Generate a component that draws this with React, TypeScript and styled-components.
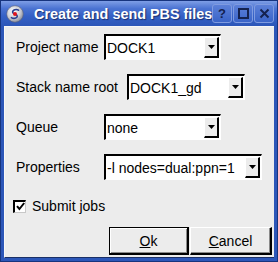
import React, {useState} from "react";
import styled, {createGlobalStyle} from "styled-components";

const Global = createGlobalStyle`
  html, body {
    margin: 0;
    padding: 0;
    background: #ececec;
  }
  * {
    box-sizing: border-box;
  }
`

const PbsDialog = () => {
    const [submit, setSubmit] = useState(true)

    return (
        <Frame>
            <Global/>
            <TitleBar>
                <AppIcon viewBox="0 0 18 18" width={18} height={18}>
                    <defs>
                        <radialGradient id="disc" cx="40%" cy="35%" r="70%">
                            <stop offset="0%" stopColor="#ffffff"/>
                            <stop offset="60%" stopColor="#c9ccd4"/>
                            <stop offset="100%" stopColor="#7d8292"/>
                        </radialGradient>
                    </defs>
                    <circle cx="9" cy="9" r="8.3" fill="url(#disc)" stroke="#5a6078" strokeWidth="0.6"/>
                    <path d="M12.5 5.2 C10.5 3.8 6.5 4.6 6.6 7.2 C6.7 9.4 11.4 8.8 11.3 11.2 C11.2 13.4 7.4 13.9 5.4 12.6"
                          fill="none" stroke="#2b3f8f" strokeWidth="1.6" strokeLinecap="round"/>
                    <circle cx="9" cy="9" r="2" fill="#e0141c"/>
                </AppIcon>
                <TitleText>Create and send PBS files</TitleText>
                <TitleButtons>
                    <TitleButton>?</TitleButton>
                    <TitleButton>
                        <svg width="11" height="11" viewBox="0 0 11 11">
                            <rect x="1" y="1" width="9" height="9" fill="none" stroke="#14224f" strokeWidth="2"/>
                        </svg>
                    </TitleButton>
                    <TitleButton>
                        <svg width="11" height="11" viewBox="0 0 11 11">
                            <path d="M1.5 1.5 L9.5 9.5 M9.5 1.5 L1.5 9.5" stroke="#14224f" strokeWidth="2"/>
                        </svg>
                    </TitleButton>
                </TitleButtons>
            </TitleBar>
            <Body>
                <Row>
                    <Label $w={88}>Project name</Label>
                    <Combo $w={117} value="DOCK1"/>
                </Row>
                <Row>
                    <Label $w={111}>Stack name root</Label>
                    <Combo $w={118} value="DOCK1_gd"/>
                </Row>
                <Row>
                    <Label $w={88}>Queue</Label>
                    <Combo $w={117} value="none"/>
                </Row>
                <Row>
                    <Label $w={88}>Properties</Label>
                    <Combo $w={158} value="-l nodes=dual:ppn=1"/>
                </Row>
                <CheckRow onClick={() => setSubmit(!submit)}>
                    <CheckBox>
                        {submit && (
                            <svg width="9" height="9" viewBox="0 0 9 9">
                                <path d="M1 4.2 L3.4 7 L8.2 1" fill="none" stroke="#000" strokeWidth="2"/>
                            </svg>
                        )}
                    </CheckBox>
                    <span>Submit jobs</span>
                </CheckRow>
                <ButtonRow>
                    <Button $default><u>O</u>k</Button>
                    <Button><u>C</u>ancel</Button>
                </ButtonRow>
            </Body>
        </Frame>
    );
}

const Combo = ({value, $w}: { value: string, $w: number }) => (
    <ComboBox $w={$w}>
        <ComboText>{value}</ComboText>
        <ArrowButton>
            <svg width="7" height="4" viewBox="0 0 7 4">
                <path d="M0 0 L7 0 L3.5 4 Z" fill="#000"/>
            </svg>
        </ArrowButton>
    </ComboBox>
)

const Frame = styled.div`
  width: 278px;
  height: 262px;
  display: flex;
  flex-direction: column;
  background: #2c56b8;
  border: 1px solid #17347e;
  padding: 0 3px 3px 3px;
  font-family: "Liberation Sans", Arial, sans-serif;
  overflow: hidden;
`

const TitleBar = styled.div`
  height: 25px;
  flex: none;
  display: flex;
  align-items: center;
  margin: 0 -3px;
  padding: 0 3px 0 5px;
  background: linear-gradient(to bottom, #7e9ee6 0%, #4b73d2 30%, #3561c6 60%, #2c56b8 100%);
`

const AppIcon = styled.svg`
  flex: none;
  margin-right: 10px;
`

const TitleText = styled.div`
  flex: 1;
  min-width: 0;
  overflow: hidden;
  white-space: nowrap;
  color: #ffffff;
  font-weight: bold;
  font-size: 14.4px;
  text-shadow: 1px 1px 1px #1b2f6e;
`

const TitleButtons = styled.div`
  display: flex;
  gap: 1px;
  flex: none;
`

const TitleButton = styled.div`
  width: 20px;
  height: 19px;
  display: flex;
  align-items: center;
  justify-content: center;
  border: 1px solid #7f9be0;
  border-radius: 3px;
  background: linear-gradient(to bottom, #5c80d8, #3a64c8);
  color: #14224f;
  font-weight: bold;
  font-size: 13px;
`

const Body = styled.div`
  flex: 1;
  background: #ececec;
  border-top: 1px solid #f7f7f7;
  border-left: 1px solid #f7f7f7;
  border-bottom: 1px solid #1a2f66;
  display: flex;
  flex-direction: column;
  padding: 7px 0 0 11px;
  gap: 14px;
  font-size: 14px;
  color: #000;
`

const Row = styled.div`
  display: flex;
  align-items: center;
  height: 26px;
`

const Label = styled.div<{ $w: number }>`
  width: ${p => p.$w}px;
  flex: none;
  white-space: nowrap;
`

const ComboBox = styled.div<{ $w: number }>`
  width: ${p => p.$w}px;
  height: 26px;
  display: flex;
  align-items: center;
  background: #ffffff;
  border-top: 2px solid #000;
  border-left: 2px solid #000;
  border-bottom: 1px solid #fff;
  border-right: 1px solid #fff;
  padding: 0 1px 0 1px;
`

const ComboText = styled.div`
  flex: 1;
  white-space: nowrap;
  overflow: hidden;
  font-size: 14px;
`

const ArrowButton = styled.div`
  width: 15px;
  height: 21px;
  flex: none;
  display: flex;
  align-items: center;
  justify-content: center;
  background: #ececec;
  border-top: 1px solid #fff;
  border-left: 1px solid #fff;
  border-right: 2px solid #000;
  border-bottom: 2px solid #000;
`

const CheckRow = styled.div`
  display: flex;
  align-items: center;
  gap: 6px;
  margin: 5px 0 0 -3px;
  height: 14px;
  cursor: default;
`

const CheckBox = styled.div`
  width: 13px;
  height: 13px;
  background: #fff;
  border-top: 2px solid #000;
  border-left: 2px solid #000;
  border-right: 1px solid #c8c8c8;
  border-bottom: 1px solid #c8c8c8;
  display: flex;
  align-items: center;
  justify-content: center;
`

const ButtonRow = styled.div`
  display: flex;
  justify-content: flex-end;
  gap: 1px;
  padding-right: 2px;
`

const Button = styled.div<{ $default?: boolean }>`
  width: ${p => p.$default ? 80 : 82}px;
  height: 28px;
  display: flex;
  align-items: center;
  justify-content: center;
  background: #ececec;
  font-size: 14px;
  border-top: 1px solid ${p => p.$default ? "#000" : "#fff"};
  border-left: 1px solid ${p => p.$default ? "#000" : "#fff"};
  border-right: 2px solid #000;
  border-bottom: 2px solid #000;
  box-shadow: ${p => p.$default ? "inset 1px 1px 0 #fff, inset -1px -1px 0 #8a8a8a" : "inset -1px -1px 0 #8a8a8a"};
`

export default PbsDialog;
